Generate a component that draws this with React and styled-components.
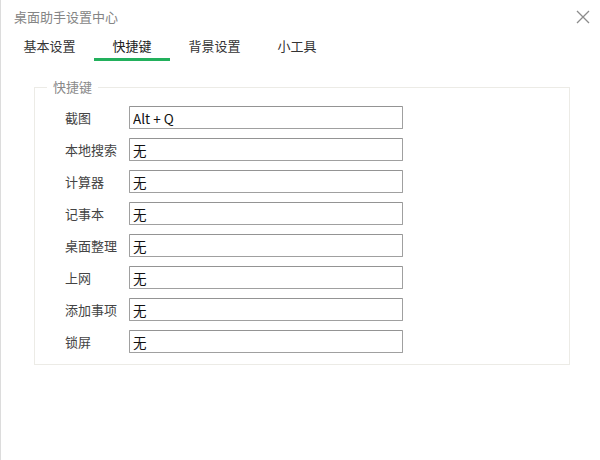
import React from "react";
import styled, { createGlobalStyle } from "styled-components";

const GlobalStyle = createGlobalStyle`
  html, body {
    margin: 0;
    padding: 0;
    background: #fff;
  }
  body {
    font-family: "Noto Sans CJK SC", "Noto Sans", sans-serif;
  }
`;

const Window = styled.div`
  width: 600px;
  height: 460px;
  box-sizing: border-box;
  border-left: 1px solid #dcdcdc;
  background: #fff;
  display: flex;
  flex-direction: column;
`;

const TitleBar = styled.div`
  height: 33px;
  display: flex;
  align-items: center;
  justify-content: space-between;
  padding: 0 8px 1px 13px;
`;

const Title = styled.span`
  font-size: 13px;
  color: #858585;
`;

const Close = styled.button`
  width: 18px;
  height: 18px;
  padding: 0;
  border: none;
  background: none;
  display: flex;
  align-items: center;
  justify-content: center;
  cursor: pointer;
`;

const Tabs = styled.div`
  display: flex;
  padding-left: 4px;
`;

const Tab = styled.div`
  height: 24px;
  line-height: 23px;
  padding: 0 18.5px;
  font-size: 13px;
  color: ${(p) => (p.active ? "#222" : "#333")};
  border-bottom: 3px solid ${(p) => (p.active ? "#22b05c" : "transparent")};
`;

const Group = styled.fieldset`
  margin: 17px 30px 0 33px;
  padding: 10px 0 11px 30px;
  border: 1px solid #ecebe6;
  min-width: 0;
`;

const Legend = styled.legend`
  margin-left: -18px;
  padding: 0 6px;
  font-size: 13px;
  line-height: 18px;
  color: #8a8a8a;
`;

const Rows = styled.div`
  display: flex;
  flex-direction: column;
  gap: 9px;
`;

const Row = styled.div`
  display: flex;
  align-items: center;
`;

const Label = styled.label`
  width: 64px;
  font-size: 13px;
  color: #444;
`;

const KeyInput = styled.input`
  width: 274px;
  height: 23px;
  box-sizing: border-box;
  margin: 0;
  padding: 0 3px;
  border: 1px solid #a0a0a0;
  border-top-color: #949494;
  border-radius: 1px;
  font-family: "Noto Sans CJK SC", "Noto Sans", sans-serif;
  font-size: 13.5px;
  color: #111;
  background: #fff;
  outline: none;
`;

const tabs = ["基本设置", "快捷键", "背景设置", "小工具"];

const shortcuts = [
  ["截图", "Alt + Q"],
  ["本地搜索", "无"],
  ["计算器", "无"],
  ["记事本", "无"],
  ["桌面整理", "无"],
  ["上网", "无"],
  ["添加事项", "无"],
  ["锁屏", "无"],
];

export default function App() {
  return (
    <>
      <GlobalStyle />
      <Window>
        <TitleBar>
          <Title>桌面助手设置中心</Title>
          <Close aria-label="关闭">
            <svg width="14" height="14" viewBox="0 0 14 14">
              <path
                d="M1 1 L13 13 M13 1 L1 13"
                stroke="#8c8c8c"
                strokeWidth="1.3"
                fill="none"
              />
            </svg>
          </Close>
        </TitleBar>
        <Tabs>
          {tabs.map((t) => (
            <Tab key={t} active={t === "快捷键"}>
              {t}
            </Tab>
          ))}
        </Tabs>
        <Group>
          <Legend>快捷键</Legend>
          <Rows>
            {shortcuts.map(([label, value]) => (
              <Row key={label}>
                <Label>{label}</Label>
                <KeyInput defaultValue={value} readOnly />
              </Row>
            ))}
          </Rows>
        </Group>
      </Window>
    </>
  );
}
